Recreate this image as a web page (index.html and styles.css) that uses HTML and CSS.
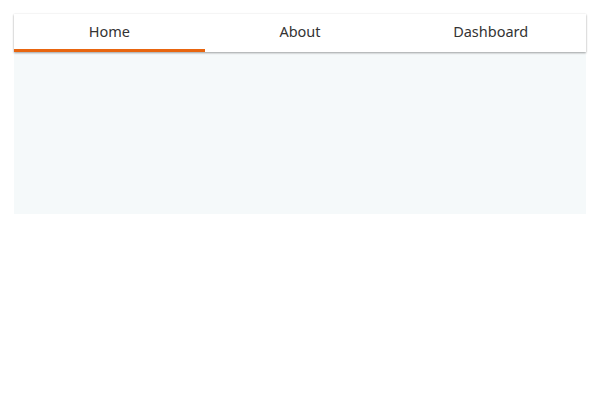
FILE: index.html
```html
<!DOCTYPE html>
<html>
<head>
<meta charset="utf-8">
<link rel="stylesheet" href="styles.css">
</head>
<body>
<div class="app">
  <nav class="tabs">
    <div class="tab active">Home</div>
    <div class="tab">About</div>
    <div class="tab">Dashboard</div>
  </nav>
  <div class="content"></div>
</div>
</body>
</html>
```
FILE: styles.css
```css
html, body { margin: 0; padding: 0; background: #fff; }
body { padding: 14px; font-family: "Noto Sans", "Open Sans", sans-serif; }
.app { width: 572px; }
.tabs {
  display: grid;
  grid-template-columns: 1fr 1fr 1fr;
  height: 38px;
  background: #fff;
  box-shadow: 0 1px 2px rgba(0,0,0,0.35), 0 0 2px rgba(0,0,0,0.06);
  position: relative;
  z-index: 1;
}
.tab {
  display: flex;
  align-items: center;
  justify-content: center;
  font-size: 14.5px;
  color: #333;
  padding-bottom: 2px;
  box-sizing: border-box;
  border-bottom: 3px solid transparent;
}
.tab.active { border-bottom-color: #e8650f; }
.content {
  height: 162px;
  background: #f5f9fa;
}
```
